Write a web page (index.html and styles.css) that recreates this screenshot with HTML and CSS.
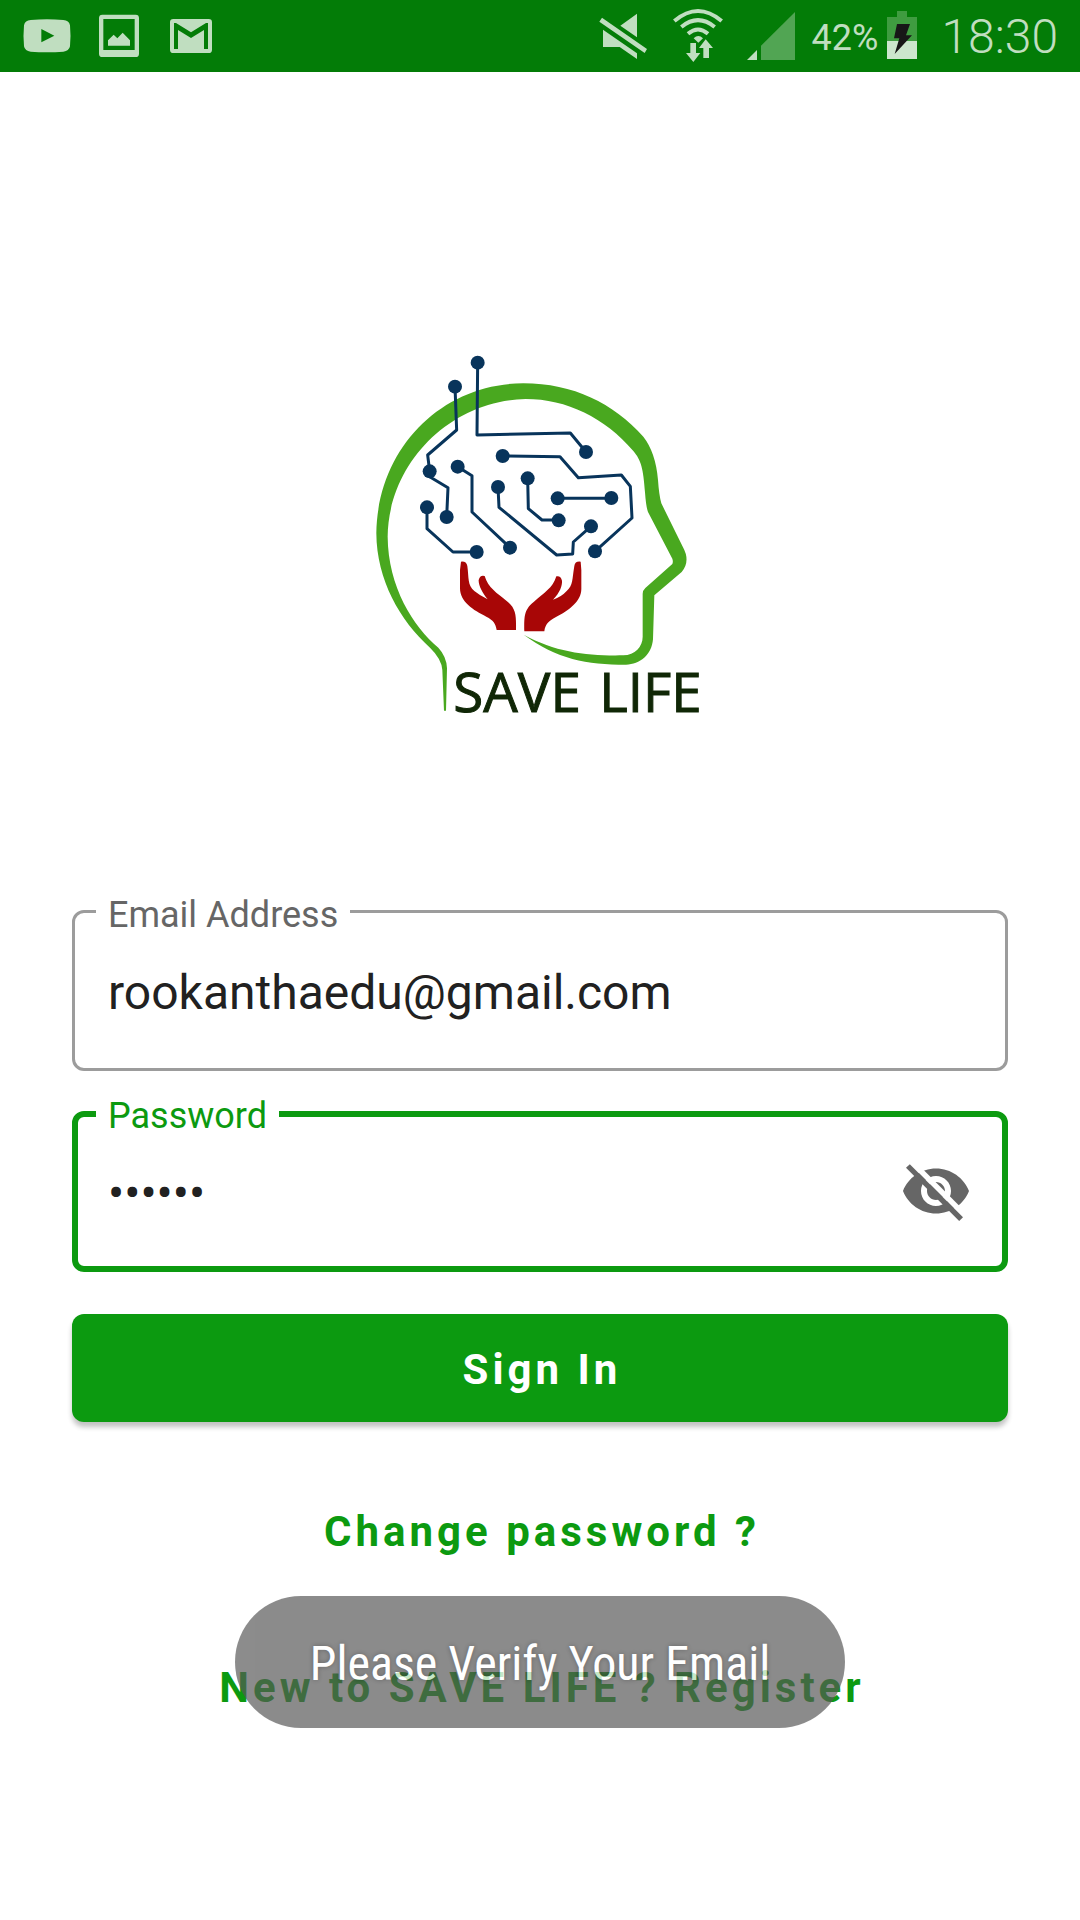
FILE: index.html
```html
<!DOCTYPE html>
<html lang="en">
<head>
<meta charset="utf-8">
<meta name="viewport" content="width=device-width, initial-scale=1">
<title>Save Life – Sign In</title>
<link rel="stylesheet" href="styles.css">
</head>
<body>
<header class="status-bar">
  <div class="status-group">
    <svg class="status-icon" viewBox="72 0 144 216" aria-hidden="true"><path fill-rule="evenodd" d="M92 60Q141 56 190 60Q207 61 210 76Q213 107 210 139Q207 154 190 155Q141 158 92 155Q75 154 72 139Q69 107 72 76Q75 61 92 60ZM124 87V127L163 107Z"/></svg>
    <svg class="status-icon" viewBox="288 0 144 216" aria-hidden="true"><path fill-rule="evenodd" d="M307 44H407Q417 44 417 54V161Q417 171 407 171H307Q297 171 297 161V54Q297 44 307 44ZM310 57V150H404V57ZM324 137V121L341 104L352 115L368 98L390 121V137Z"/></svg>
    <svg class="status-icon" viewBox="504 0 144 216" aria-hidden="true"><path fill-rule="evenodd" d="M520 57H626Q636 57 636 67V149Q636 159 626 159H520Q510 159 510 149V67Q510 57 520 57ZM522 69V147H534V90L573 114L612 90V147H624V69H618L573 97L528 69Z"/></svg>
  </div>
  <div class="status-group status-group-end">
    <svg class="status-icon" viewBox="57 0 144 216" aria-hidden="true"><path d="M66 53L201 147L194 159L58 65ZM171 41V112L121 77ZM69 89L171 160V177L119 141H69Z"/></svg>
    <svg class="status-icon" viewBox="273 0 144 216" aria-hidden="true"><g fill="none" stroke="#c0dec0" stroke-width="12"><path d="M283 63Q354 3 425 63"/><path d="M304 81Q354 40 404 81"/><path d="M324 101Q354 76 384 101"/></g><path d="M341 115Q355 101 369 115L355 128ZM331 129H348V159H361L340 186L318 159H331ZM377 118L399 144H387V174H370V144H357Z"/></svg>
    <svg class="status-icon signal" viewBox="498 0 144 216" aria-hidden="true"><path d="M498 180L528 150V180Z"/><path fill="#51a553" d="M540 180V137L642 36V180Z"/></svg>
    <span class="battery-level">42%</span>
    <svg class="battery-icon" viewBox="924 0 90 216" aria-hidden="true"><path fill="#3f9c40" d="M954 33H984V51H1014V123H924V51H954Z"/><path fill="#cce6cd" d="M924 123H1014V177H924Z"/><path fill="#171717" d="M954 72H993L981 106H999L947 162L961 115H945Z"/></svg>
    <time class="clock">18:30</time>
  </div>
</header>

<main class="login">
  <svg class="logo" viewBox="0 0 1080 1170" role="img" aria-label="Save Life">
    <path fill="#49a81f" d="M252 1112L247 990Q245 957 210 923C120 842 50 720 49 580C52 325 245 130 490 130C640 130 760 190 850 290Q887 337 894 420Q897 465 904 490L969 622Q992 664 965 696L883 766L879 898C875 945 840 973 798 974C680 974 590 957 491 884C590 938 685 948 790 946C825 945 848 920 848 890V762Q848 751 856 744L937 672Q940 665 937 656L864 516Q858 500 855 457C850 385 843 360 820 333C735 233 620 177 497 177C265 182 85 375 83 590C84 740 160 860 235 923Q260 950 261 985L258 1112Z"/>
    <g fill="none" stroke="#08345b" stroke-width="9" stroke-linejoin="round">
      <path d="M353 68L351 285L631 279L678 336M285 140L290 270L203 345L209 394M209 410L264 443L260 531M201 502V566L279 636H350M293 380L336 407V516L450 623M414 441L417 502L590 645L638 642L640 606L693 559M503 415L505 506L546 540H596M593 475H753M428 348L600 350L655 413L784 405L811 439L816 534L705 634"/>
    </g>
    <g fill="#08345b">
      <circle cx="353" cy="68" r="21"/><circle cx="285" cy="140" r="21"/><circle cx="678" cy="336" r="21"/><circle cx="209" cy="394" r="21"/><circle cx="293" cy="380" r="21"/><circle cx="428" cy="348" r="21"/><circle cx="414" cy="441" r="21"/><circle cx="503" cy="415" r="21"/><circle cx="593" cy="475" r="21"/><circle cx="754" cy="474" r="21"/><circle cx="201" cy="502" r="21"/><circle cx="260" cy="531" r="21"/><circle cx="596" cy="541" r="21"/><circle cx="693" cy="559" r="21"/><circle cx="450" cy="623" r="21"/><circle cx="350" cy="636" r="21"/><circle cx="705" cy="634" r="21"/>
    </g>
    <g fill="#a80606">
      <path d="M303 665Q319 663 322 678C327 715 322 735 343 753Q360 767 383 778C367 760 355 735 356 720Q360 704 374 708C384 743 411 759 440 783C471 807 468 832 468 870H410C407 850 400 841 379 830C340 811 300 785 300 745V690Z"/>
      <path d="M662 665Q645 663 643 678C636 718 640 735 620 753Q605 770 579 779C600 757 607 737 606 722Q602 706 589 709C579 744 551 759 521 786C490 810 493 835 493 874H553C556 853 565 843 588 831C625 812 664 785 664 747V690Z"/>
    </g>
    <text class="logo-name" x="280" y="1115">SAVE <tspan x="718">LIFE</tspan></text>
  </svg>

  <form class="form">
    <div class="field">
      <input class="field-input" id="email" type="email" value="rookanthaedu@gmail.com">
      <label class="field-label" for="email">Email Address</label>
    </div>
    <div class="field field-active">
      <input class="field-input" id="password" type="password" value="secret">
      <label class="field-label" for="password">Password</label>
      <button class="toggle" type="button" aria-label="Show password">
        <svg class="toggle-icon" viewBox="0 0 24 24" aria-hidden="true"><path fill-rule="evenodd" d="M12 4.5C7 4.5 2.730 7.610 1 12c1.730 4.390 6 7.500 11 7.500s9.270-3.110 11-7.500c-1.730-4.390-6-7.500-11-7.500zM12 17c-2.760 0-5-2.240-5-5s2.240-5 5-5 5 2.240 5 5-2.240 5-5 5zm0-8c-1.660 0-3 1.340-3 3s1.340 3 3 3 3-1.340 3-3-1.340-3-3-3z"/><path fill="#fff" d="M4.550 1.700L22 19.150L20.750 20.500L3.300 3z"/><path d="M3.270 3.100L21 20.730L19.730 22L2 4.270z"/></svg>
      </button>
    </div>
    <button class="sign-in" type="submit">Sign In</button>
  </form>

  <nav class="links">
    <a class="link" href="#change">Change password ?</a>
    <a class="link" href="#register">New to SAVE LIFE ? Register</a>
  </nav>
</main>

<div class="toast" role="status">Please Verify Your Email</div>
</body>
</html>
```
FILE: styles.css
```css
* {
  box-sizing: border-box;
}

body {
  position: relative;
  min-height: 100vh;
  margin: 0;
  background: #fff;
  font-family: Roboto, "Liberation Sans", sans-serif;
}

.status-bar {
  display: flex;
  justify-content: space-between;
  padding: 0 22px 0 24px;
  background: #037c07;
  color: #c0dec0;
}

.status-group {
  display: flex;
  gap: 24px;
  align-items: center;
}

.status-icon {
  width: 48px;
  height: 72px;
  fill: #c0dec0;
  overflow: visible;
}

.signal {
  margin-left: 4px;
}

.battery-icon {
  width: 30px;
  height: 72px;
}

.battery-level {
  margin: 0 -15px 0 -7px;
  padding-top: 4px;
  font-size: 36px;
  line-height: 42px;
}

.clock {
  padding-top: 2px;
  font-size: 48px;
  font-weight: 300;
  line-height: 56px;
}

.login {
  display: flex;
  flex-direction: column;
  padding: 268px 72px 0;
}

.logo {
  align-self: center;
  width: 360px;
  height: 390px;
}

.logo-name {
  fill: #102706;
  stroke: #102706;
  stroke-width: 3px;
  font-family: "Open Sans", "Noto Sans", sans-serif;
  font-size: 164px;
  font-weight: 500;
}

.form {
  display: flex;
  flex-direction: column;
  gap: 40px;
  margin-top: 180px;
}

.field {
  position: relative;
  display: flex;
}

.field-input {
  flex: 1;
  min-width: 0;
  height: 161px;
  padding: 4px 33px 0;
  border: 3px solid #9c9c9c;
  border-radius: 12px;
  outline: none;
  background: #fff;
  color: #212121;
  font: 48px Roboto, "Liberation Sans", sans-serif;
}

.field-label {
  position: absolute;
  top: -16px;
  left: 24px;
  padding: 0 12px;
  background: #fff;
  color: #666;
  font-size: 36px;
  line-height: 42px;
}

.field-active .field-input {
  padding: 4px 120px 0 30px;
  border: 6px solid #0c9a10;
}

.field-active .field-label {
  color: #0c9a10;
}

.toggle {
  position: absolute;
  top: 0;
  right: 36px;
  bottom: 2px;
  display: flex;
  align-items: center;
  padding: 0;
  border: 0;
  background: none;
}

.toggle-icon {
  width: 72px;
  height: 72px;
  fill: #666;
}

.sign-in {
  height: 108px;
  margin-top: 2px;
  padding: 2px 0 0 4px;
  border: 0;
  border-radius: 12px;
  background: #0c9a10;
  box-shadow: 0 5px 5px rgba(0, 0, 0, 0.24);
  color: #fff;
  font: bold 42px Roboto, "Liberation Sans", sans-serif;
  letter-spacing: 4px;
}

.links {
  display: flex;
  flex-direction: column;
  gap: 108px;
  align-items: center;
  padding: 86px 0 120px 4px;
}

.link {
  color: #0c9a10;
  font-size: 42px;
  font-weight: bold;
  line-height: 48px;
  letter-spacing: 4px;
  text-decoration: none;
  white-space: nowrap;
}

.toast {
  position: absolute;
  right: 0;
  bottom: 192px;
  left: 0;
  width: fit-content;
  margin: 0 auto;
  padding: 40px 75px 36px;
  border-radius: 66px;
  background: rgba(88, 88, 88, 0.9);
  color: #fff;
  font-family: "Roboto Condensed", Roboto, sans-serif;
  font-size: 48px;
  line-height: 56px;
  text-shadow: 0 0 5px rgba(0, 0, 0, 0.5);
  white-space: nowrap;
  opacity: 0.76;
}
```
